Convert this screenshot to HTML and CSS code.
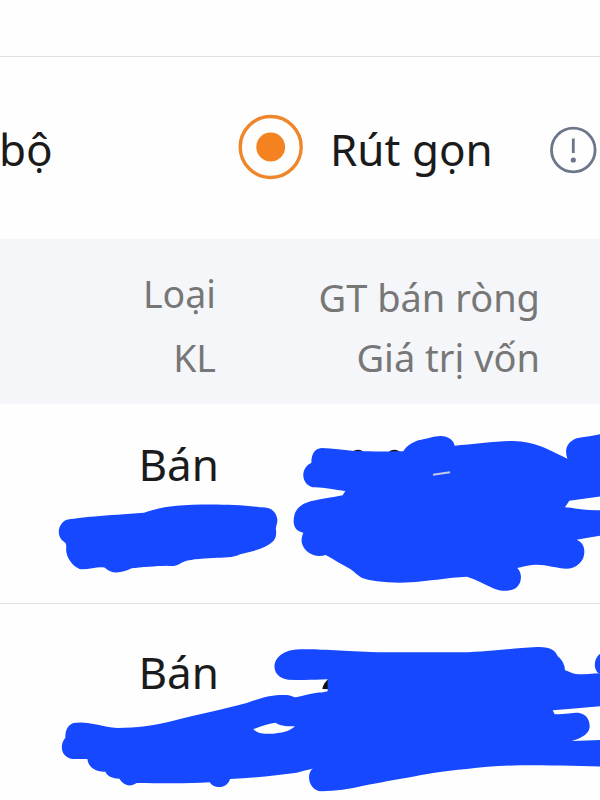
FILE: index.html
```html
<!DOCTYPE html>
<html lang="vi">
  <head>
    <meta charset="utf-8">
    <meta name="viewport" content="width=device-width, initial-scale=1">
    <title>Rút gọn</title>
    <link rel="stylesheet" href="styles.css">
  </head>
  <body>
    <div class="topbar"></div>
    <!-- view mode -->
    <div class="options">
      <span class="option-all">bộ</span>
      <svg class="radio" viewBox="0 0 66 66">
        <circle cx="33.7" cy="33" r="30.5" fill="none" stroke="#f0862a" stroke-width="3.4"/>
        <circle cx="33.7" cy="33" r="14.4" fill="#f58220"/>
      </svg>
      <span class="option-short">Rút gọn</span>
      <svg class="info" viewBox="0 0 48 48">
        <circle cx="24.3" cy="24" r="21.8" fill="none" stroke="#6c7689" stroke-width="2.8"/>
        <path d="M24.3 12.5V27" stroke="#6c7689" stroke-width="2.8"/>
        <circle cx="24.3" cy="34" r="2.6" fill="#6c7689"/>
      </svg>
    </div>
    <!-- table head -->
    <div class="head">
      <div class="col-type">
        <div>Loại</div>
        <div>KL</div>
      </div>
      <div class="col-value">
        <div>GT bán ròng</div>
        <div>Giá trị vốn</div>
      </div>
    </div>
    <!-- rows -->
    <div class="row">
      <div class="type">Bán</div>
      <svg class="marker marker-first" viewBox="0 0 1800 600">
        <g transform="translate(120 78)">
          <path d="M78 270C110 262 200 256 312 248C350 236 375 230 410 227C480 222 590 222 660 232C690 230 708 242 712 268C713 280 706 290 708 300C711 325 702 338 675 350C650 362 620 368 600 373C580 384 550 383 520 384C480 386 445 388 425 398C405 410 395 408 380 407C350 408 300 411 275 415C245 430 212 433 195 413C175 408 155 418 125 418C110 418 82 392 79 366C77 355 82 342 74 337C50 323 50 285 78 270Z"/>
        </g>
        <g transform="translate(840 63)">
          <path class="ink" d="M215 84C224 71 244 71 253 84ZM324 84C333 71 353 71 362 84Z"/>
          <path d="M125 69C160 71 190 74 215 77C250 79 330 80 370 79C382 60 395 54 415 46C440 42 460 33 482 33C505 34 521 45 524 62C575 58 640 49 690 48C730 47 765 56 795 69C820 81 840 90 862 101C852 72 862 51 890 40C915 35 940 34 970 25V213L868 227L855 247C890 250 920 258 970 255V331C940 334 915 340 890 344C909 352 916 370 912 390C908 414 885 431 860 431C830 430 800 418 765 419C745 421 730 424 712 429C728 445 726 475 708 489C688 500 662 499 643 491C613 478 590 464 561 455C500 457 450 470 360 473C310 472 265 467 245 458C232 451 225 442 212 433C185 418 160 403 137 390C105 400 72 383 65 352C64 342 66 332 70 323C40 318 37 293 44 267C52 245 70 236 92 229C125 221 158 218 188 211L196 198C165 195 135 188 105 187C85 187 68 169 70 147C72 131 80 120 94 114C94 88 104 70 125 69Z"/>
          <path class="gap" d="M459 149L510 142"/>
        </g>
      </svg>
    </div>
    <div class="row">
      <div class="type">Bán</div>
      <svg class="marker marker-second" viewBox="0 0 1800 600">
        <g transform="translate(120 48)">
          <path fill-rule="evenodd" d="M100 309C145 302 180 320 232 324C290 322 340 318 400 302C480 282 540 270 620 249C670 231 695 224 740 225C755 226 760 232 768 232C790 228 815 219 842 217V440C825 443 800 450 770 458C710 466 640 474 570 477C562 507 520 508 509 487C450 491 370 490 290 489C270 502 252 497 238 476C218 475 202 469 196 455C165 456 145 441 142 417L98 417C63 412 57 376 76 353C76 329 84 315 100 309ZM640 328C655 342 680 342 700 341C725 338 745 337 765 319C745 318 725 320 706 308C685 312 660 318 640 328Z"/>
        </g>
        <g transform="translate(810 48)">
          <path class="ink" d="M176 176C166 184 158 196 157 207L182 208Z"/>
          <path d="M100 88C160 87 230 95 340 97H575C660 95 720 85 800 81C840 79 858 92 863 109C876 119 884 132 885 151C900 155 907 162 925 163C950 162 970 160 1000 159V258C950 262 905 267 848 271L854 283C890 282 905 278 925 278C950 282 960 300 959 322C956 345 930 356 905 363C940 362 970 361 1000 360V440C920 438 840 436 750 436C690 437 640 441 590 447C520 453 460 463 420 472C370 479 330 489 280 497C240 507 195 513 155 514C116 512 106 461 130 443L110 446V227L173 214V178C130 180 95 180 55 179C8 174 0 126 35 103C55 90 72 88 100 88Z"/>
          <path d="M1000 96C975 105 965 140 985 160H1000Z"/>
        </g>
      </svg>
    </div>
  </body>
</html>
```
FILE: styles.css
```css
* {
  box-sizing: border-box;
}
body {
  margin: 0;
  width: 600px;
  height: 800px;
  overflow: hidden;
  background: #fefefe;
  color: #1b1b1b;
  font-family: "Noto Sans", sans-serif;
  font-size: 44px;
  line-height: 60px;
}
.topbar {
  height: 57px;
  border-bottom: 1px solid #e2e2e2;
}
/* view mode */
.options {
  display: flex;
  align-items: flex-start;
  height: 182px;
  padding-top: 57px;
}
.option-all {
  width: 238px;
  padding-top: 5px;
  margin-left: -1px;
}
.radio {
  flex: none;
  width: 66px;
  height: 66px;
}
.option-short {
  width: 219px;
  padding: 5px 0 0 27px;
  white-space: nowrap;
}
.info {
  flex: none;
  width: 48px;
  height: 48px;
  margin: 12px 0 0 27px;
}
/* table head */
.head {
  display: flex;
  height: 165px;
  background: #f5f6f9;
  color: #777;
  font-size: 38px;
  text-align: right;
  white-space: nowrap;
}
.col-type {
  width: 216px;
  padding-top: 23px;
  font-size: 37.5px;
  line-height: 64px;
}
.col-value {
  width: 324px;
  padding-top: 28px;
  line-height: 60px;
}
/* rows */
.row {
  position: relative;
  height: 200px;
  padding-top: 30px;
  border-bottom: 1px solid #e2e2e2;
}
.row:last-child {
  border-bottom: 0;
  padding-top: 38px;
}
.type {
  width: 219px;
  text-align: right;
}
/* marker strokes over the amounts */
.marker {
  position: absolute;
  top: 0;
  left: 0;
  width: 600px;
  height: 200px;
  fill: #1548ff;
}
.ink {
  fill: #111;
}
.gap {
  fill: none;
  stroke: #c3cbea;
  stroke-width: 6;
}
```
